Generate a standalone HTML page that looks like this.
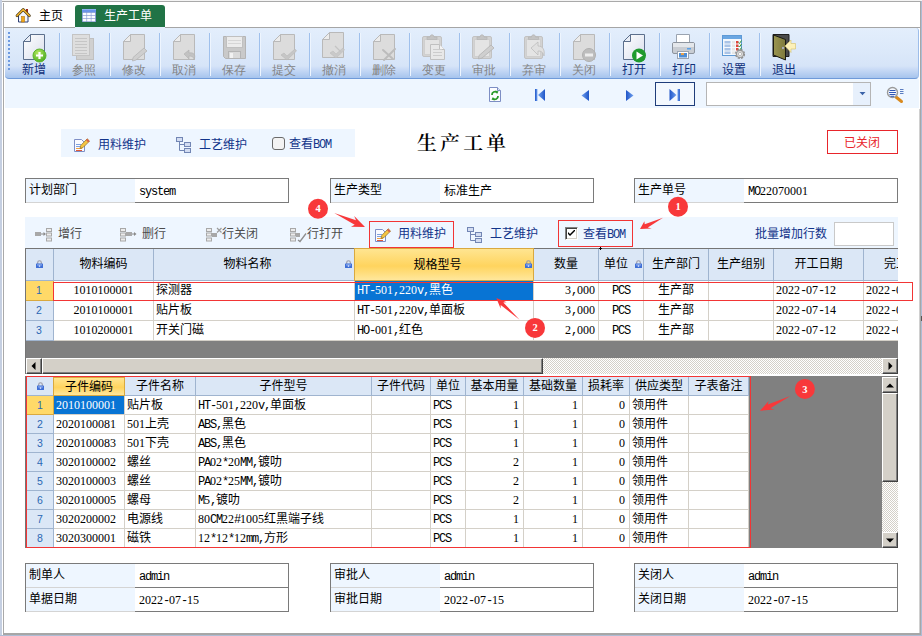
<!DOCTYPE html>
<html><head><meta charset="utf-8"><title>生产工单</title>
<style>
*{box-sizing:border-box}
html,body{margin:0;padding:0}
body{width:922px;height:636px;position:relative;overflow:hidden;background:#fff;font-family:"Liberation Serif","Noto Sans CJK SC",sans-serif;font-size:12px;color:#000;line-height:14px}
.a{position:absolute}
.t{position:absolute;white-space:nowrap;line-height:14px;height:14px}
#tb{left:5px;top:28px;width:914px;height:51px;background:linear-gradient(#e3eefc 0,#dce9fa 22px,#d6e4f8 38px,#cadbf6 41px,#a6c4ed 50px);border-bottom:1px solid #6f9ad9;border-right:1px solid #9dbdea;border-radius:0 3px 4px 4px}
.sep{position:absolute;top:33px;width:2px;height:43px;border-left:1px solid #9fc0ec;border-right:1px solid #eef5fe}
.bl{position:absolute;top:63px;width:50px;text-align:center;color:#10307a;white-space:nowrap;line-height:14px}
.bl.d{color:#838383}
.ic{position:absolute;top:33px;width:28px;height:28px}
.fb{position:absolute;border:1px solid #7a7a7a;background:#fff}
.fl{position:absolute;left:0;top:0;background:#eef6ff}
.gh{position:absolute;background:#dbe7f6;border-right:1px solid #9fb4cf;border-bottom:1px solid #9fb4cf;text-align:center;white-space:nowrap;overflow:hidden}
.gh.s{background:linear-gradient(#ffe591 0,#ffd45e 55%,#ffe79c 100%);border:1px solid #d9a93f;}
.gc{position:absolute;background:#fff;border-right:1px solid #d4d0c8;border-bottom:1px solid #d4d0c8;white-space:nowrap;overflow:hidden}
.gc.sel{background:#0874d4;color:#fff}
.gi{position:absolute;background:#dbe7f6;border-right:1px solid #9fb4cf;border-bottom:1px solid #9fb4cf;color:#2b68b4;text-align:center;font-family:"Liberation Sans",sans-serif;font-size:10.5px}
.gi.s{background:#ffd968;border-color:#d9a93f}
.nv{color:#14377d}
.m{font-family:"Liberation Mono",monospace;font-size:12px;letter-spacing:-1.2px}
.d{font-family:"Liberation Serif",serif;font-size:12px}
.sbb{position:absolute;background:#d4d0c8;border:1px solid;border-color:#fff #404040 #404040 #fff;box-shadow:inset -1px -1px 0 #808080, inset 1px 1px 0 #d4d0c8}
.trk{position:absolute;background-color:#fff;background-image:linear-gradient(45deg,#d4d0c8 25%,transparent 25%,transparent 75%,#d4d0c8 75%),linear-gradient(45deg,#d4d0c8 25%,transparent 25%,transparent 75%,#d4d0c8 75%);background-size:2px 2px;background-position:0 0,1px 1px}
</style></head><body>
<div class="a" style="left:0px;top:0px;width:2px;height:636px;background:#c5cfe1;"></div>
<div class="a" style="left:921px;top:0px;width:1px;height:636px;background:#aebcd5;"></div>
<div class="a" style="left:0px;top:635px;width:922px;height:1px;background:#aebcd5;"></div>
<div class="a" style="left:2px;top:0px;width:920px;height:1px;background:#f4f4f4;"></div>
<div class="a" style="left:2px;top:1px;width:919px;height:1px;background:#a9a9a9;"></div>
<div class="a" style="left:3px;top:3px;width:1px;height:631px;background:#a9a9a9;"></div>
<div class="a" style="left:920px;top:2px;width:1px;height:633px;background:#a7a7a7;"></div>
<div class="a" style="left:919px;top:109px;width:1px;height:524px;background:#d0d0d0;"></div>
<div class="a" style="left:3px;top:633px;width:918px;height:2px;background:#a7a7a7;"></div>
<div class="a" style="left:921px;top:316px;width:1px;height:5px;background:#555;"></div>
<div class="a" style="left:4px;top:27px;width:916px;height:1px;background:#a5a5a5;"></div>
<div class="a" style="left:75px;top:5px;width:90px;height:22px;background:#217346;border-radius:3px 3px 0 0"></div>
<div class="a" style="left:75px;top:27px;width:90px;height:1px;background:#e3eefc;"></div>
<svg class="a" style="left:15px;top:7px" width="17" height="17" viewBox="15 7 17 17">
<rect x="26" y="9" width="2" height="5" fill="#9c2a1c"/>
<path d="M18.500 15v7h9.500v-7l-4.750-4.500z" fill="#f4f6fc" stroke="#2d3f74" stroke-width="1"/>
<rect x="21.500" y="16.500" width="3" height="5.500" fill="#f0a81c" stroke="#b87708" stroke-width=".6"/>
<path d="M17 15.800l6.200-6.300 6.200 6.300" fill="none" stroke="#4a3a18" stroke-width="2.700" stroke-linecap="round" stroke-linejoin="round"/>
<path d="M17 15.800l6.200-6.300 6.200 6.300" fill="none" stroke="#f6b72a" stroke-width="1.400" stroke-linecap="round" stroke-linejoin="round"/>
</svg>
<svg class="a" style="left:82px;top:9px" width="14" height="13" viewBox="0 0 14 13">
<rect x="0" y="0" width="14" height="13" fill="#7f95cf"/>
<rect x="0" y="0" width="14" height="3.200" fill="#6a94ea"/>
<rect x="0" y="0" width="14" height="1" fill="#8fb2f4"/>
<rect x="0.80" y="3.80" width="3.700" height="2.450" fill="#fbfcff"/>
<rect x="5.10" y="3.80" width="3.700" height="2.450" fill="#fbfcff"/>
<rect x="9.40" y="3.80" width="3.700" height="2.450" fill="#fbfcff"/>
<rect x="0.80" y="6.85" width="3.700" height="2.450" fill="#fbfcff"/>
<rect x="5.10" y="6.85" width="3.700" height="2.450" fill="#fbfcff"/>
<rect x="9.40" y="6.85" width="3.700" height="2.450" fill="#fbfcff"/>
<rect x="0.80" y="9.90" width="3.700" height="2.450" fill="#fbfcff"/>
<rect x="5.10" y="9.90" width="3.700" height="2.450" fill="#fbfcff"/>
<rect x="9.40" y="9.90" width="3.700" height="2.450" fill="#fbfcff"/>
</svg>
<div class="t" style="left:39px;top:9px;">主页</div>
<div class="t" style="left:104px;top:9px;color:#fff">生产工单</div>
<div class="a" id="tb"></div>
<div class="a" style="left:8px;top:32px;width:2px;height:2px;background:#6f9be0;"></div>
<div class="a" style="left:8px;top:36px;width:2px;height:2px;background:#6f9be0;"></div>
<div class="a" style="left:8px;top:40px;width:2px;height:2px;background:#6f9be0;"></div>
<div class="a" style="left:8px;top:44px;width:2px;height:2px;background:#6f9be0;"></div>
<div class="a" style="left:8px;top:48px;width:2px;height:2px;background:#6f9be0;"></div>
<div class="a" style="left:8px;top:52px;width:2px;height:2px;background:#6f9be0;"></div>
<div class="a" style="left:8px;top:56px;width:2px;height:2px;background:#6f9be0;"></div>
<div class="a" style="left:8px;top:60px;width:2px;height:2px;background:#6f9be0;"></div>
<div class="a" style="left:8px;top:64px;width:2px;height:2px;background:#6f9be0;"></div>
<div class="a" style="left:8px;top:68px;width:2px;height:2px;background:#6f9be0;"></div>
<div class="bl" style="left:9px">新增</div>
<div class="sep" style="left:59px"></div>
<div class="bl d" style="left:59px">参照</div>
<div class="sep" style="left:109px"></div>
<div class="bl d" style="left:109px">修改</div>
<div class="sep" style="left:159px"></div>
<div class="bl d" style="left:159px">取消</div>
<div class="sep" style="left:209px"></div>
<div class="bl d" style="left:209px">保存</div>
<div class="sep" style="left:259px"></div>
<div class="bl d" style="left:259px">提交</div>
<div class="sep" style="left:309px"></div>
<div class="bl d" style="left:309px">撤消</div>
<div class="sep" style="left:359px"></div>
<div class="bl d" style="left:359px">删除</div>
<div class="sep" style="left:409px"></div>
<div class="bl d" style="left:409px">变更</div>
<div class="sep" style="left:459px"></div>
<div class="bl d" style="left:459px">审批</div>
<div class="sep" style="left:509px"></div>
<div class="bl d" style="left:509px">弃审</div>
<div class="sep" style="left:559px"></div>
<div class="bl d" style="left:559px">关闭</div>
<div class="sep" style="left:609px"></div>
<div class="bl" style="left:609px">打开</div>
<div class="sep" style="left:659px"></div>
<div class="bl" style="left:659px">打印</div>
<div class="sep" style="left:709px"></div>
<div class="bl" style="left:709px">设置</div>
<div class="sep" style="left:759px"></div>
<div class="bl" style="left:759px">退出</div>
<svg class="a" style="left:0;top:28px" width="922" height="51" viewBox="0 28 922 51">
<defs><linearGradient id="pg" x1="0" y1="0" x2="1" y2="1"><stop offset="0" stop-color="#ffffff"/><stop offset="1" stop-color="#d9deec"/></linearGradient><radialGradient id="gr" cx=".4" cy=".3" r=".8"><stop offset="0" stop-color="#b5ea5e"/><stop offset="1" stop-color="#3fa31d"/></radialGradient><linearGradient id="door" x1="0" y1="0" x2="1" y2="0"><stop offset="0" stop-color="#9a9550"/><stop offset="1" stop-color="#7f7a3c"/></linearGradient></defs>
<path d="M30.5 34.5H44.5V59.5H23.5V41.5Z" fill="url(#pg)" stroke="#5c6f8c"/><path d="M30.5 34.5V41.5H23.5Z" fill="#e9eef7" stroke="#5c6f8c" stroke-linejoin="round"/>
<circle cx="39.5" cy="55.5" r="6.5" fill="url(#gr)" stroke="#5bb52c" stroke-width="1"/>
<path d="M36 55.5h7M39.5 52v7" stroke="#fff" stroke-width="2.2"/>
<rect x="76.5" y="38.5" width="17" height="21" fill="#d0d0d0" stroke="#c0c0c0"/>
<rect x="72.5" y="34.5" width="17" height="21" fill="#dedede" stroke="#c4c4c4"/>
<path d="M75 38.5h12" stroke="#c6c6c6"/>
<path d="M75 41.5h12" stroke="#c6c6c6"/>
<path d="M75 44.5h12" stroke="#c6c6c6"/>
<path d="M75 47.5h12" stroke="#c6c6c6"/>
<path d="M75 50.5h12" stroke="#c6c6c6"/>
<path d="M75 53.5h12" stroke="#c6c6c6"/>
<path d="M130.5 34.5H144.5V59.5H123.5V41.5Z" fill="#dcdcdc" stroke="#b9b9b9"/><path d="M130.5 34.5V41.5H123.5Z" fill="#ececec" stroke="#b9b9b9" stroke-linejoin="round"/>
<path d="M144 48l3 3-11 9-3.5 1 .5-3.5z" fill="#cfcfcf" stroke="#b5b5b5" stroke-width=".8"/>
<path d="M180.5 34.5H194.5V59.5H173.5V41.5Z" fill="#dcdcdc" stroke="#b9b9b9"/><path d="M180.5 34.5V41.5H173.5Z" fill="#ececec" stroke="#b9b9b9" stroke-linejoin="round"/>
<path d="M184 54l5-4v3c5-1 7 2 5 7c0-3-2-4-5-4v3z" fill="#c2c2c2" stroke="#b0b0b0" stroke-width=".6"/>
<path d="M223.5 36.5h22v22h-20l-2-2z" fill="#c9c9c9" stroke="#b4b4b4"/>
<rect x="226.5" y="36.5" width="16" height="11" fill="#ececec" stroke="#c0c0c0"/>
<path d="M228 40.5h13M228 43.5h13" stroke="#d6d6d6"/>
<rect x="228.5" y="51.5" width="12" height="7" fill="#dadada" stroke="#b4b4b4"/>
<rect x="230" y="53" width="3" height="5" fill="#f2f2f2"/>
<path d="M280.5 34.5H294.5V59.5H273.5V41.5Z" fill="#dcdcdc" stroke="#b9b9b9"/><path d="M280.5 34.5V41.5H273.5Z" fill="#ececec" stroke="#b9b9b9" stroke-linejoin="round"/>
<path d="M281 55l3-2 3 3 8-7 1.5 2-9.5 9z" fill="#c6c6c6" stroke="#b8b8b8" stroke-width=".6"/>
<path d="M329.5 32.5H343.5V57.5H322.5V39.5Z" fill="#dcdcdc" stroke="#b9b9b9"/><path d="M329.5 32.5V39.5H322.5Z" fill="#ececec" stroke="#b9b9b9" stroke-linejoin="round"/>
<path d="M330 53l3-2 3 3 7-6 1.5 2-8.5 8z" fill="#c9c9c9" stroke="#bdbdbd" stroke-width=".6"/>
<path d="M335 46l6 6" stroke="#c4c4c4" stroke-width="1.3"/>
<path d="M380.5 34.5H394.5V59.5H373.5V41.5Z" fill="#dcdcdc" stroke="#b9b9b9"/><path d="M380.5 34.5V41.5H373.5Z" fill="#ececec" stroke="#b9b9b9" stroke-linejoin="round"/>
<path d="M383 50l10 9M395 49l-11 11" stroke="#bcbcbc" stroke-width="2" stroke-linecap="round"/>
<rect x="422.5" y="36.5" width="19" height="20.0" rx="1.5" fill="#d3d3d3" stroke="#c2c2c2"/><rect x="424.5" y="39.5" width="15" height="15.0" fill="#e4e4e4" stroke="#cfcfcf"/><path d="M427.0 39.5v-2.5h3c0-3 4-3 4 0h3v2.5z" fill="#c4c4c4" stroke="#b4b4b4" stroke-width=".7"/>
<path d="M430.5 44.5h9l5 5v10h-14z" fill="#e8e8e8" stroke="#c0c0c0"/>
<path d="M439.5 44.5v5h5" fill="#f4f4f4" stroke="#c0c0c0"/>
<path d="M433 49.5h9" stroke="#cccccc"/>
<path d="M433 52.5h9" stroke="#cccccc"/>
<path d="M433 55.5h9" stroke="#cccccc"/>
<rect x="472.5" y="36.5" width="19" height="22.0" rx="1.5" fill="#d3d3d3" stroke="#c2c2c2"/><rect x="474.5" y="39.5" width="15" height="17.0" fill="#e4e4e4" stroke="#cfcfcf"/><path d="M477.0 39.5v-2.5h3c0-3 4-3 4 0h3v2.5z" fill="#c4c4c4" stroke="#b4b4b4" stroke-width=".7"/>
<path d="M491 45l3 3-12 10-3.5 1 .5-3.5z" fill="#cfcfcf" stroke="#b2b2b2" stroke-width=".8"/>
<rect x="524.5" y="36.5" width="18" height="22.0" rx="1.5" fill="#d3d3d3" stroke="#c2c2c2"/><rect x="526.5" y="39.5" width="14" height="17.0" fill="#e4e4e4" stroke="#cfcfcf"/><path d="M528.5 39.5v-2.5h3c0-3 4-3 4 0h3v2.5z" fill="#c4c4c4" stroke="#b4b4b4" stroke-width=".7"/>
<path d="M531 48l7-6v4c5 0 7 4 6 10c-1-4-3-5-6-5v4z" fill="#e0e0e0" stroke="#bdbdbd" stroke-width=".8"/>
<path d="M580.5 34.5H594.5V59.5H573.5V41.5Z" fill="#dcdcdc" stroke="#b9b9b9"/><path d="M580.5 34.5V41.5H573.5Z" fill="#ececec" stroke="#b9b9b9" stroke-linejoin="round"/>
<circle cx="589" cy="55" r="6.5" fill="#bdbdbd" stroke="#b0b0b0"/>
<rect x="585" y="53.5" width="8" height="3" fill="#ededed"/>
<path d="M630.5 34.5H644.5V59.5H623.5V41.5Z" fill="url(#pg)" stroke="#5c6f8c"/><path d="M630.5 34.5V41.5H623.5Z" fill="#e9eef7" stroke="#5c6f8c" stroke-linejoin="round"/>
<circle cx="639" cy="55.5" r="7" fill="#1f9a2e"/>
<path d="M636.5 51.5v8l6.5-4z" fill="#fff"/>
<path d="M676.5 44v-9.5h13v9.5" fill="#fff" stroke="#9aa3b0"/>
<rect x="672.5" y="42.5" width="22" height="11" rx="1.5" fill="#c9cdd3" stroke="#8d949e"/>
<rect x="673" y="43" width="21" height="4" fill="#e4e7eb"/>
<rect x="687" y="48" width="4" height="1.5" fill="#5aa0e6"/>
<rect x="677.5" y="51.5" width="11" height="7" fill="#fff" stroke="#9aa3b0"/>
<rect x="679" y="53" width="8" height="4.5" fill="#4f8ed6"/>
<rect x="681" y="53" width="3" height="2" fill="#e8a04a"/>
<rect x="722.5" y="35.5" width="19" height="20" fill="#f4f8fd" stroke="#5e9ad6"/>
<rect x="723" y="36" width="18" height="3" fill="#6aa6e2"/>
<rect x="724.5" y="41" width="6" height="2.5" fill="#a9c3e6"/>
<rect x="732" y="41" width="3" height="2.5" fill="#e6e6e6"/>
<rect x="736" y="41" width="2.5" height="2.5" fill="#e0453a"/>
<path d="M738.5 42.5l1 1 2-3" stroke="#3a9a35" fill="none" stroke-width="1"/>
<rect x="724.5" y="44.5" width="6" height="2.5" fill="#a9c3e6"/>
<rect x="732" y="44.5" width="3" height="2.5" fill="#e6e6e6"/>
<rect x="736" y="44.5" width="2.5" height="2.5" fill="#e0453a"/>
<path d="M738.5 46.0l1 1 2-3" stroke="#3a9a35" fill="none" stroke-width="1"/>
<rect x="724.5" y="48" width="6" height="2.5" fill="#a9c3e6"/>
<rect x="732" y="48" width="3" height="2.5" fill="#e6e6e6"/>
<rect x="736" y="48" width="2.5" height="2.5" fill="#e0453a"/>
<path d="M738.5 49.5l1 1 2-3" stroke="#3a9a35" fill="none" stroke-width="1"/>
<rect x="724.5" y="51.5" width="6" height="2.5" fill="#a9c3e6"/>
<rect x="732" y="51.5" width="3" height="2.5" fill="#e6e6e6"/>
<circle cx="740" cy="54" r="4" fill="#e9e9e9" stroke="#8e8e8e" stroke-width="2.2" stroke-dasharray="2 1.14"/>
<circle cx="740" cy="54" r="3.6" fill="#dcdcdc" stroke="#8e8e8e" stroke-width=".9"/>
<circle cx="740" cy="54" r="1.6" fill="#fff" stroke="#9a9a9a" stroke-width=".6"/>
<path d="M773 34.5h16v22h-16z" fill="#4a4a4a" stroke="#1e1e1e"/>
<path d="M773.5 35l12 4.5v20.5l-12-5z" fill="url(#door)" stroke="#1a1a12"/>
<circle cx="783" cy="48" r="1.2" fill="#d8d8e8" stroke="#555" stroke-width=".4"/>
<path d="M785 46l6-6v3.5h4.5v5.5h-4.5v3.5z" fill="#fdf1b8" stroke="#d9c777" stroke-width=".7"/>
</svg>
<div class="a" style="left:5px;top:79px;width:914px;height:29px;background:#eef6ff;"></div>
<div class="a" style="left:655px;top:82px;width:40px;height:24px;background:#f3f8fe;border:1px solid #1f3d7a"></div>
<div class="a" style="left:706px;top:82px;width:165px;height:24px;background:#fff;border:1px solid #b5b5b5"></div>
<div class="a" style="left:853px;top:83px;width:17px;height:22px;background:#e7f0fc;"></div>
<svg class="a" style="left:859px;top:92px" width="7" height="4"><path d="M0.5 0h6l-3 3.2z" fill="#3a62a8"/></svg>
<svg class="a" style="left:480px;top:79px" width="440" height="29" viewBox="480 79 440 29">
<defs><linearGradient id="nb" x1="0" y1="0" x2="1" y2="0"><stop offset="0" stop-color="#1f55c8"/><stop offset="1" stop-color="#6fa0ee"/></linearGradient><linearGradient id="nb2" x1="1" y1="0" x2="0" y2="0"><stop offset="0" stop-color="#1f55c8"/><stop offset="1" stop-color="#6fa0ee"/></linearGradient></defs>
<path d="M489.500 87.500h8l3 3v11h-11z" fill="#fdfdff" stroke="#7d8ec4"/>
<path d="M497.500 87.500v3h3" fill="#dfe6f8" stroke="#7d8ec4"/>
<path d="M492 95a3 3 0 0 1 5-2.500" fill="none" stroke="#2a9a2a" stroke-width="1.8"/>
<path d="M498 96a3 3 0 0 1-5 2.500" fill="none" stroke="#2a9a2a" stroke-width="1.800"/>
<path d="M495.500 90.500l3 1-1.500 2.500z" fill="#2a9a2a"/><path d="M494.500 100.500l-3-1 1.500-2.500z" fill="#2a9a2a"/>
<rect x="535" y="89" width="2.400" height="12" fill="url(#nb)"/>
<path d="M545 89v12l-7-6z" fill="url(#nb2)"/>
<path d="M589 90v11l-7.500-5.500z" fill="url(#nb2)"/>
<path d="M626 90v11l7.500-5.500z" fill="url(#nb)"/>
<path d="M669.500 89v12l7-6z" fill="url(#nb)"/>
<rect x="677.500" y="89" width="2.400" height="12" fill="url(#nb2)"/>
<path d="M896 97l5.500 4.500" stroke="#d98a1e" stroke-width="3" stroke-linecap="round"/>
<circle cx="892.500" cy="92.500" r="5" fill="#f4f8ff" stroke="#9a9a9a" stroke-width="1.400"/>
<path d="M889.500 90.500h6M889 92.500h7M889.500 94.500h6M890.500 96.300h3.500" stroke="#2f58b8" stroke-width="1"/>
<path d="M900 89.500h3.500M900 91.500h3.500M900 93.500h3.500" stroke="#5a7cc0" stroke-width="1"/>
</svg>
<div class="a" style="left:61px;top:129px;width:294px;height:28px;background:#eef6ff;"></div>
<div class="t" style="left:98px;top:138px;color:#12348a">用料维护</div>
<div class="t" style="left:199px;top:138px;color:#12348a">工艺维护</div>
<div class="a" style="left:272px;top:137px;width:13px;height:13px;background:#f3f3f3;border:1px solid #6a6a6a;border-radius:3px"></div>
<div class="t" style="left:289px;top:137px;color:#12348a">查看<span class="m">BOM</span></div>
<div class="t" style="left:417px;top:131px;font-family:'Liberation Serif','Noto Serif CJK SC',serif;font-weight:600;font-size:19.8px;letter-spacing:3.3px;line-height:24px;height:24px">生产工单</div>
<div class="a" style="left:827px;top:130px;width:71px;height:24px;background:#fff;border:1px solid #e8252b"></div>
<div class="t" style="left:844px;top:136px;color:#e8252b">已关闭</div>
<div class="fb" style="left:25px;top:178px;width:264px;height:25px">
<div class="fl" style="top:0px;width:109px;height:23px"></div>
<div class="a" style="left:0px;top:23px;width:109px;height:1px;background:#d4d4d4"></div>
<div class="t" style="left:3px;top:4px">计划部门</div>
<div class="t" style="left:113px;top:5px"><span class="m">system</span></div>
</div>
<div class="fb" style="left:330px;top:178px;width:264px;height:25px">
<div class="fl" style="top:0px;width:109px;height:23px"></div>
<div class="a" style="left:0px;top:23px;width:109px;height:1px;background:#d4d4d4"></div>
<div class="t" style="left:3px;top:4px">生产类型</div>
<div class="t" style="left:113px;top:5px">标准生产</div>
</div>
<div class="fb" style="left:634px;top:178px;width:264px;height:25px">
<div class="fl" style="top:0px;width:109px;height:23px"></div>
<div class="a" style="left:0px;top:23px;width:109px;height:1px;background:#d4d4d4"></div>
<div class="t" style="left:3px;top:4px">生产单号</div>
<div class="t" style="left:113px;top:5px"><span class="m">MO</span><span class="d">22070001</span></div>
</div>
<div class="fb" style="left:25px;top:563px;width:264px;height:49px">
<div class="fl" style="top:0px;width:109px;height:23px"></div>
<div class="a" style="left:0px;top:23px;width:109px;height:1px;background:#d4d4d4"></div>
<div class="a" style="left:109px;top:23px;width:153px;height:1px;background:#7a7a7a"></div>
<div class="t" style="left:3px;top:4px">制单人</div>
<div class="t" style="left:113px;top:5px"><span class="m">admin</span></div>
<div class="fl" style="top:24px;width:109px;height:23px"></div>
<div class="a" style="left:0px;top:47px;width:109px;height:1px;background:#d4d4d4"></div>
<div class="t" style="left:3px;top:28px">单据日期</div>
<div class="t" style="left:113px;top:29px"><span class="d">2022</span><span class="m">-</span><span class="d">07</span><span class="m">-</span><span class="d">15</span></div>
</div>
<div class="fb" style="left:330px;top:563px;width:264px;height:49px">
<div class="fl" style="top:0px;width:109px;height:23px"></div>
<div class="a" style="left:0px;top:23px;width:109px;height:1px;background:#d4d4d4"></div>
<div class="a" style="left:109px;top:23px;width:153px;height:1px;background:#7a7a7a"></div>
<div class="t" style="left:3px;top:4px">审批人</div>
<div class="t" style="left:113px;top:5px"><span class="m">admin</span></div>
<div class="fl" style="top:24px;width:109px;height:23px"></div>
<div class="a" style="left:0px;top:47px;width:109px;height:1px;background:#d4d4d4"></div>
<div class="t" style="left:3px;top:28px">审批日期</div>
<div class="t" style="left:113px;top:29px"><span class="d">2022</span><span class="m">-</span><span class="d">07</span><span class="m">-</span><span class="d">15</span></div>
</div>
<div class="fb" style="left:634px;top:563px;width:264px;height:49px">
<div class="fl" style="top:0px;width:109px;height:23px"></div>
<div class="a" style="left:0px;top:23px;width:109px;height:1px;background:#d4d4d4"></div>
<div class="a" style="left:109px;top:23px;width:153px;height:1px;background:#7a7a7a"></div>
<div class="t" style="left:3px;top:4px">关闭人</div>
<div class="t" style="left:113px;top:5px"><span class="m">admin</span></div>
<div class="fl" style="top:24px;width:109px;height:23px"></div>
<div class="a" style="left:0px;top:47px;width:109px;height:1px;background:#d4d4d4"></div>
<div class="t" style="left:3px;top:28px">关闭日期</div>
<div class="t" style="left:113px;top:29px"><span class="d">2022</span><span class="m">-</span><span class="d">07</span><span class="m">-</span><span class="d">15</span></div>
</div>
<div class="a" style="left:25px;top:217px;width:873px;height:31px;background:#eef6ff;"></div>
<div class="t" style="left:58px;top:227px;color:#4c4c4c">增行</div>
<div class="t" style="left:142px;top:227px;color:#4c4c4c">删行</div>
<div class="t" style="left:222px;top:227px;color:#4c4c4c">行关闭</div>
<div class="t" style="left:307px;top:227px;color:#4c4c4c">行打开</div>
<div class="t" style="left:398px;top:227px;color:#12348a">用料维护</div>
<div class="t" style="left:490px;top:227px;color:#12348a">工艺维护</div>
<div class="t" style="left:583px;top:227px;color:#12348a">查看<span class="m">BOM</span></div>
<div class="t" style="left:755px;top:227px;color:#12348a">批量增加行数</div>
<div class="a" style="left:834px;top:222px;width:60px;height:24px;background:#fff;border:1px solid #c9c9c9"></div>
<svg class="a" style="left:0;top:120px" width="922" height="130" viewBox="0 120 922 130">
<path d="M74.5 139.5h7l3 3v9h-10z" fill="#fafbff" stroke="#7f8fc6"/><path d="M76 144.5h5M76 146.5h4" stroke="#7ea0dc"/><path d="M76 148.5h6" stroke="#f0a040"/><path d="M76 150.5h6" stroke="#e05a3a"/><path d="M87.2 138.8l2.300 2.300-6.500 6.500-3 .800 .800-3z" fill="#f5c542" stroke="#8a6a1e" stroke-width=".7"/><path d="M87.2 138.8l2.300 2.300-1.300 1.300-2.300-2.300z" fill="#d8604a"/>
<rect x="176.5" y="137.5" width="6" height="4" fill="#d3ddf2" stroke="#7286b4"/><rect x="184.5" y="142.5" width="6" height="4" fill="#d3ddf2" stroke="#7286b4"/><rect x="184.5" y="148.5" width="6" height="4" fill="#d3ddf2" stroke="#7286b4"/><path d="M179.5 142v8.500h5M179.5 144.5h5" fill="none" stroke="#7286b4"/>
<path d="M375.5 229.5h7l3 3v9h-10z" fill="#fafbff" stroke="#7f8fc6"/><path d="M377 234.5h5M377 236.5h4" stroke="#7ea0dc"/><path d="M377 238.5h6" stroke="#f0a040"/><path d="M377 240.5h6" stroke="#e05a3a"/><path d="M388.2 228.8l2.300 2.300-6.500 6.500-3 .800 .800-3z" fill="#f5c542" stroke="#8a6a1e" stroke-width=".7"/><path d="M388.2 228.8l2.300 2.300-1.300 1.300-2.300-2.300z" fill="#d8604a"/>
<rect x="467.5" y="227.5" width="6" height="4" fill="#d3ddf2" stroke="#7286b4"/><rect x="475.5" y="232.5" width="6" height="4" fill="#d3ddf2" stroke="#7286b4"/><rect x="475.5" y="238.5" width="6" height="4" fill="#d3ddf2" stroke="#7286b4"/><path d="M470.5 232v8.500h5M470.5 234.5h5" fill="none" stroke="#7286b4"/>
<rect x="35" y="232" width="6" height="4" fill="#a8a8a8"/><path d="M41 234h3" stroke="#8a8a8a"/><path d="M43.500 232l2.500 2-2.500 2z" fill="#8a8a8a"/>
<rect x="46.500" y="228.5" width="5" height="3" fill="#ececec" stroke="#a8a8a8"/>
<rect x="46.500" y="233.0" width="5" height="3" fill="#ececec" stroke="#a8a8a8"/>
<rect x="46.500" y="238.0" width="5" height="3" fill="#ececec" stroke="#a8a8a8"/>
<rect x="120.500" y="228.5" width="5" height="3" fill="#ececec" stroke="#a8a8a8"/>
<rect x="120.500" y="233.0" width="5" height="3" fill="#ececec" stroke="#a8a8a8"/>
<rect x="120.500" y="238.0" width="5" height="3" fill="#ececec" stroke="#a8a8a8"/>
<rect x="126" y="232" width="6" height="4" fill="#a8a8a8"/><path d="M132 234h3" stroke="#8a8a8a"/><path d="M134 232l2.500 2-2.500 2z" fill="#8a8a8a"/>
<rect x="206.500" y="228.5" width="5" height="3" fill="#ececec" stroke="#a8a8a8"/>
<rect x="206.500" y="233.0" width="5" height="3" fill="#ececec" stroke="#a8a8a8"/>
<rect x="206.500" y="238.0" width="5" height="3" fill="#ececec" stroke="#a8a8a8"/>
<rect x="212" y="233" width="5" height="4" fill="#a8a8a8"/>
<path d="M217 228l4.500 4.500M221.500 228l-4.500 4.500" stroke="#9c9c9c" stroke-width="1.200"/>
<rect x="290.500" y="228.5" width="5" height="3" fill="#ececec" stroke="#a8a8a8"/>
<rect x="290.500" y="233.0" width="5" height="3" fill="#ececec" stroke="#a8a8a8"/>
<rect x="290.500" y="238.0" width="5" height="3" fill="#ececec" stroke="#a8a8a8"/>
<rect x="296" y="233" width="4" height="4" fill="#a8a8a8"/>
<path d="M298 240l2 1.500 6-8" fill="none" stroke="#8e8e8e" stroke-width="1.300"/>
</svg>
<div class="a" style="left:565px;top:227px;width:13px;height:13px;background:#fff;border:1px solid;border-color:#808080 #fff #fff #808080;box-shadow:inset 1px 1px 0 #404040,inset -1px -1px 0 #d4d0c8"></div>
<svg class="a" style="left:568px;top:230px" width="7" height="7"><path d="M0 2v2l2 2 5-5v-2l-5 5z" fill="#000"/></svg>
<div class="a" style="left:25px;top:248px;width:873px;height:1px;background:#757575;"></div>
<div class="gh" style="left:25px;top:249px;width:29px;height:32px;padding-top:8px;"></div>
<div class="gh" style="left:54px;top:249px;width:100px;height:32px;padding-top:8px;">物料编码</div>
<div class="gh" style="left:154px;top:249px;width:201px;height:32px;padding-top:8px;padding-right:13px;">物料名称</div>
<div class="gh s" style="left:354px;top:248px;width:180px;height:33px;line-height:14px;padding-top:9px;padding-right:13px">规格型号</div>
<div class="gh" style="left:534px;top:249px;width:65px;height:32px;padding-top:8px;">数量</div>
<div class="gh" style="left:599px;top:249px;width:45px;height:32px;padding-top:8px;text-align:left;padding-left:5px">单位</div>
<div class="gh" style="left:644px;top:249px;width:65px;height:32px;padding-top:8px;">生产部门</div>
<div class="gh" style="left:709px;top:249px;width:65px;height:32px;padding-top:8px;">生产组别</div>
<div class="gh" style="left:774px;top:249px;width:90px;height:32px;padding-top:8px;">开工日期</div>
<div class="gh" style="left:864px;top:249px;width:34px;height:32px;padding-top:8px;border-right:0;text-align:left;padding-left:20px">完工</div>
<div class="gi s" style="left:25px;top:281px;width:29px;height:20px;padding-top:2px;">1</div>
<div class="gc" style="left:54px;top:281px;width:100px;height:20px;padding-top:2px;text-align:center;"><span class="d">1010100001</span></div>
<div class="gc" style="left:154px;top:281px;width:201px;height:20px;padding-top:2px;text-align:left;padding-left:2px;">探测器</div>
<div class="gc sel" style="left:355px;top:281px;width:179px;height:20px;padding-top:2px;text-align:left;padding-left:2px;"><span class="m">HT-</span><span class="d">501</span><span class="m">,</span><span class="d">220</span><span class="m">v,</span>黑色</div>
<div class="gc" style="left:534px;top:281px;width:65px;height:20px;padding-top:2px;text-align:right;padding-right:3px;"><span class="d">3</span><span class="m">,</span><span class="d">000</span></div>
<div class="gc" style="left:599px;top:281px;width:45px;height:20px;padding-top:2px;text-align:center;"><span class="m">PCS</span></div>
<div class="gc" style="left:644px;top:281px;width:65px;height:20px;padding-top:2px;text-align:center;">生产部</div>
<div class="gc" style="left:709px;top:281px;width:65px;height:20px;padding-top:2px;text-align:left;padding-left:2px;"></div>
<div class="gc" style="left:774px;top:281px;width:90px;height:20px;padding-top:2px;text-align:left;padding-left:2px;"><span class="d">2022</span><span class="m">-</span><span class="d">07</span><span class="m">-</span><span class="d">12</span></div>
<div class="gc" style="left:864px;top:281px;width:34px;height:20px;padding-top:2px;text-align:left;padding-left:2px;border-right:0;"><span class="d">2022</span><span class="m">-</span><span class="d">0</span></div>
<div class="gi" style="left:25px;top:301px;width:29px;height:20px;padding-top:2px;">2</div>
<div class="gc" style="left:54px;top:301px;width:100px;height:20px;padding-top:2px;text-align:center;"><span class="d">2010100001</span></div>
<div class="gc" style="left:154px;top:301px;width:201px;height:20px;padding-top:2px;text-align:left;padding-left:2px;">贴片板</div>
<div class="gc" style="left:355px;top:301px;width:179px;height:20px;padding-top:2px;text-align:left;padding-left:2px;"><span class="m">HT-</span><span class="d">501</span><span class="m">,</span><span class="d">220</span><span class="m">v,</span>单面板</div>
<div class="gc" style="left:534px;top:301px;width:65px;height:20px;padding-top:2px;text-align:right;padding-right:3px;"><span class="d">3</span><span class="m">,</span><span class="d">000</span></div>
<div class="gc" style="left:599px;top:301px;width:45px;height:20px;padding-top:2px;text-align:center;"><span class="m">PCS</span></div>
<div class="gc" style="left:644px;top:301px;width:65px;height:20px;padding-top:2px;text-align:center;">生产部</div>
<div class="gc" style="left:709px;top:301px;width:65px;height:20px;padding-top:2px;text-align:left;padding-left:2px;"></div>
<div class="gc" style="left:774px;top:301px;width:90px;height:20px;padding-top:2px;text-align:left;padding-left:2px;"><span class="d">2022</span><span class="m">-</span><span class="d">07</span><span class="m">-</span><span class="d">14</span></div>
<div class="gc" style="left:864px;top:301px;width:34px;height:20px;padding-top:2px;text-align:left;padding-left:2px;border-right:0;"><span class="d">2022</span><span class="m">-</span><span class="d">0</span></div>
<div class="gi" style="left:25px;top:321px;width:29px;height:20px;padding-top:2px;">3</div>
<div class="gc" style="left:54px;top:321px;width:100px;height:20px;padding-top:2px;text-align:center;"><span class="d">1010200001</span></div>
<div class="gc" style="left:154px;top:321px;width:201px;height:20px;padding-top:2px;text-align:left;padding-left:2px;">开关门磁</div>
<div class="gc" style="left:355px;top:321px;width:179px;height:20px;padding-top:2px;text-align:left;padding-left:2px;"><span class="m">HO-</span><span class="d">001</span><span class="m">,</span>红色</div>
<div class="gc" style="left:534px;top:321px;width:65px;height:20px;padding-top:2px;text-align:right;padding-right:3px;"><span class="d">2</span><span class="m">,</span><span class="d">000</span></div>
<div class="gc" style="left:599px;top:321px;width:45px;height:20px;padding-top:2px;text-align:center;"><span class="m">PCS</span></div>
<div class="gc" style="left:644px;top:321px;width:65px;height:20px;padding-top:2px;text-align:center;">生产部</div>
<div class="gc" style="left:709px;top:321px;width:65px;height:20px;padding-top:2px;text-align:left;padding-left:2px;"></div>
<div class="gc" style="left:774px;top:321px;width:90px;height:20px;padding-top:2px;text-align:left;padding-left:2px;"><span class="d">2022</span><span class="m">-</span><span class="d">07</span><span class="m">-</span><span class="d">12</span></div>
<div class="gc" style="left:864px;top:321px;width:34px;height:20px;padding-top:2px;text-align:left;padding-left:2px;border-right:0;"><span class="d">2022</span><span class="m">-</span><span class="d">0</span></div>
<svg class="a" style="left:36px;top:260px" width="7" height="8" viewBox="0 0 7 8"><path d="M1.700 4v-1.500a1.800 1.800 0 0 1 3.600 0v1.500" fill="none" stroke="#9a9aa6" stroke-width="1.100"/><rect x="0" y="3.500" width="7" height="4.500" rx=".6" fill="#3f6fd6"/><rect x="1" y="4.300" width="5" height="1.200" fill="#86a8ee"/><rect x="2.800" y="5.300" width="1.400" height="1.500" fill="#dfe8fb"/></svg>
<svg class="a" style="left:345px;top:260px" width="7" height="8" viewBox="0 0 7 8"><path d="M1.700 4v-1.500a1.800 1.800 0 0 1 3.600 0v1.500" fill="none" stroke="#9a9aa6" stroke-width="1.100"/><rect x="0" y="3.500" width="7" height="4.500" rx=".6" fill="#3f6fd6"/><rect x="1" y="4.300" width="5" height="1.200" fill="#86a8ee"/><rect x="2.800" y="5.300" width="1.400" height="1.500" fill="#dfe8fb"/></svg>
<svg class="a" style="left:525px;top:260px" width="7" height="8" viewBox="0 0 7 8"><path d="M1.700 4v-1.500a1.800 1.800 0 0 1 3.600 0v1.500" fill="none" stroke="#9a9aa6" stroke-width="1.100"/><rect x="0" y="3.500" width="7" height="4.500" rx=".6" fill="#3f6fd6"/><rect x="1" y="4.300" width="5" height="1.200" fill="#86a8ee"/><rect x="2.800" y="5.300" width="1.400" height="1.500" fill="#dfe8fb"/></svg>
<svg class="a" style="left:635px;top:260px" width="7" height="8" viewBox="0 0 7 8"><path d="M1.700 4v-1.500a1.800 1.800 0 0 1 3.600 0v1.500" fill="none" stroke="#9a9aa6" stroke-width="1.100"/><rect x="0" y="3.500" width="7" height="4.500" rx=".6" fill="#3f6fd6"/><rect x="1" y="4.300" width="5" height="1.200" fill="#86a8ee"/><rect x="2.800" y="5.300" width="1.400" height="1.500" fill="#dfe8fb"/></svg>
<div class="a" style="left:25px;top:341px;width:873px;height:17px;background:#808080;"></div>
<div class="trk" style="left:25px;top:358px;width:873px;height:16px"></div>
<div class="sbb" style="left:26px;top:358px;width:16px;height:16px"></div>
<div class="sbb" style="left:882px;top:358px;width:16px;height:16px"></div>
<div class="sbb" style="left:42px;top:358px;width:501px;height:16px"></div>
<svg class="a" style="left:31px;top:362px" width="5" height="8"><path d="M4.5 0v8l-4-4z" fill="#000"/></svg>
<svg class="a" style="left:888px;top:362px" width="5" height="8"><path d="M0.5 0v8l4-4z" fill="#000"/></svg>
<div class="a" style="left:25px;top:248px;width:1px;height:126px;background:#757575;"></div>
<div class="a" style="left:25px;top:376px;width:873px;height:172px;background:#808080;"></div>
<div class="gh" style="left:27px;top:377px;width:27px;height:19px;padding-top:2px"></div>
<div class="gh s" style="left:53px;top:377px;width:72px;height:19px;padding-top:2px">子件编码</div>
<div class="gh" style="left:125px;top:377px;width:71px;height:19px;padding-top:2px">子件名称</div>
<div class="gh" style="left:196px;top:377px;width:176px;height:19px;padding-top:2px">子件型号</div>
<div class="gh" style="left:372px;top:377px;width:59px;height:19px;padding-top:2px">子件代码</div>
<div class="gh" style="left:431px;top:377px;width:35px;height:19px;padding-top:2px">单位</div>
<div class="gh" style="left:466px;top:377px;width:58px;height:19px;padding-top:2px">基本用量</div>
<div class="gh" style="left:524px;top:377px;width:59px;height:19px;padding-top:2px">基础数量</div>
<div class="gh" style="left:583px;top:377px;width:47px;height:19px;padding-top:2px">损耗率</div>
<div class="gh" style="left:630px;top:377px;width:59px;height:19px;padding-top:2px">供应类型</div>
<div class="gh" style="left:689px;top:377px;width:60px;height:19px;padding-top:2px">子表备注</div>
<div class="gi s" style="left:27px;top:396px;width:27px;height:19px;padding-top:2px">1</div>
<div class="gc sel" style="left:54px;top:396px;width:71px;height:19px;padding-top:2px;text-align:left;padding-left:2px;"><span class="d">2010100001</span></div>
<div class="gc" style="left:125px;top:396px;width:71px;height:19px;padding-top:2px;text-align:left;padding-left:2px;">贴片板</div>
<div class="gc" style="left:196px;top:396px;width:176px;height:19px;padding-top:2px;text-align:left;padding-left:2px;"><span class="m">HT-</span><span class="d">501</span><span class="m">,</span><span class="d">220</span><span class="m">v,</span>单面板</div>
<div class="gc" style="left:372px;top:396px;width:59px;height:19px;padding-top:2px;text-align:left;padding-left:2px;"></div>
<div class="gc" style="left:431px;top:396px;width:35px;height:19px;padding-top:2px;text-align:left;padding-left:2px;"><span class="m">PCS</span></div>
<div class="gc" style="left:466px;top:396px;width:58px;height:19px;padding-top:2px;text-align:right;padding-right:4px;"><span class="d">1</span></div>
<div class="gc" style="left:524px;top:396px;width:59px;height:19px;padding-top:2px;text-align:right;padding-right:4px;"><span class="d">1</span></div>
<div class="gc" style="left:583px;top:396px;width:47px;height:19px;padding-top:2px;text-align:right;padding-right:4px;"><span class="d">0</span></div>
<div class="gc" style="left:630px;top:396px;width:59px;height:19px;padding-top:2px;text-align:left;padding-left:2px;">领用件</div>
<div class="gc" style="left:689px;top:396px;width:60px;height:19px;padding-top:2px;text-align:left;padding-left:2px;"></div>
<div class="gi" style="left:27px;top:415px;width:27px;height:19px;padding-top:2px">2</div>
<div class="gc" style="left:54px;top:415px;width:71px;height:19px;padding-top:2px;text-align:left;padding-left:2px;"><span class="d">2020100081</span></div>
<div class="gc" style="left:125px;top:415px;width:71px;height:19px;padding-top:2px;text-align:left;padding-left:2px;"><span class="d">501</span>上壳</div>
<div class="gc" style="left:196px;top:415px;width:176px;height:19px;padding-top:2px;text-align:left;padding-left:2px;"><span class="m">ABS,</span>黑色</div>
<div class="gc" style="left:372px;top:415px;width:59px;height:19px;padding-top:2px;text-align:left;padding-left:2px;"></div>
<div class="gc" style="left:431px;top:415px;width:35px;height:19px;padding-top:2px;text-align:left;padding-left:2px;"><span class="m">PCS</span></div>
<div class="gc" style="left:466px;top:415px;width:58px;height:19px;padding-top:2px;text-align:right;padding-right:4px;"><span class="d">1</span></div>
<div class="gc" style="left:524px;top:415px;width:59px;height:19px;padding-top:2px;text-align:right;padding-right:4px;"><span class="d">1</span></div>
<div class="gc" style="left:583px;top:415px;width:47px;height:19px;padding-top:2px;text-align:right;padding-right:4px;"><span class="d">0</span></div>
<div class="gc" style="left:630px;top:415px;width:59px;height:19px;padding-top:2px;text-align:left;padding-left:2px;">领用件</div>
<div class="gc" style="left:689px;top:415px;width:60px;height:19px;padding-top:2px;text-align:left;padding-left:2px;"></div>
<div class="gi" style="left:27px;top:434px;width:27px;height:19px;padding-top:2px">3</div>
<div class="gc" style="left:54px;top:434px;width:71px;height:19px;padding-top:2px;text-align:left;padding-left:2px;"><span class="d">2020100083</span></div>
<div class="gc" style="left:125px;top:434px;width:71px;height:19px;padding-top:2px;text-align:left;padding-left:2px;"><span class="d">501</span>下壳</div>
<div class="gc" style="left:196px;top:434px;width:176px;height:19px;padding-top:2px;text-align:left;padding-left:2px;"><span class="m">ABS,</span>黑色</div>
<div class="gc" style="left:372px;top:434px;width:59px;height:19px;padding-top:2px;text-align:left;padding-left:2px;"></div>
<div class="gc" style="left:431px;top:434px;width:35px;height:19px;padding-top:2px;text-align:left;padding-left:2px;"><span class="m">PCS</span></div>
<div class="gc" style="left:466px;top:434px;width:58px;height:19px;padding-top:2px;text-align:right;padding-right:4px;"><span class="d">1</span></div>
<div class="gc" style="left:524px;top:434px;width:59px;height:19px;padding-top:2px;text-align:right;padding-right:4px;"><span class="d">1</span></div>
<div class="gc" style="left:583px;top:434px;width:47px;height:19px;padding-top:2px;text-align:right;padding-right:4px;"><span class="d">0</span></div>
<div class="gc" style="left:630px;top:434px;width:59px;height:19px;padding-top:2px;text-align:left;padding-left:2px;">领用件</div>
<div class="gc" style="left:689px;top:434px;width:60px;height:19px;padding-top:2px;text-align:left;padding-left:2px;"></div>
<div class="gi" style="left:27px;top:453px;width:27px;height:19px;padding-top:2px">4</div>
<div class="gc" style="left:54px;top:453px;width:71px;height:19px;padding-top:2px;text-align:left;padding-left:2px;"><span class="d">3020100002</span></div>
<div class="gc" style="left:125px;top:453px;width:71px;height:19px;padding-top:2px;text-align:left;padding-left:2px;">螺丝</div>
<div class="gc" style="left:196px;top:453px;width:176px;height:19px;padding-top:2px;text-align:left;padding-left:2px;"><span class="m">PA</span><span class="d">02</span><span class="m">*</span><span class="d">20</span><span class="m">MM,</span>镀叻</div>
<div class="gc" style="left:372px;top:453px;width:59px;height:19px;padding-top:2px;text-align:left;padding-left:2px;"></div>
<div class="gc" style="left:431px;top:453px;width:35px;height:19px;padding-top:2px;text-align:left;padding-left:2px;"><span class="m">PCS</span></div>
<div class="gc" style="left:466px;top:453px;width:58px;height:19px;padding-top:2px;text-align:right;padding-right:4px;"><span class="d">2</span></div>
<div class="gc" style="left:524px;top:453px;width:59px;height:19px;padding-top:2px;text-align:right;padding-right:4px;"><span class="d">1</span></div>
<div class="gc" style="left:583px;top:453px;width:47px;height:19px;padding-top:2px;text-align:right;padding-right:4px;"><span class="d">0</span></div>
<div class="gc" style="left:630px;top:453px;width:59px;height:19px;padding-top:2px;text-align:left;padding-left:2px;">领用件</div>
<div class="gc" style="left:689px;top:453px;width:60px;height:19px;padding-top:2px;text-align:left;padding-left:2px;"></div>
<div class="gi" style="left:27px;top:472px;width:27px;height:19px;padding-top:2px">5</div>
<div class="gc" style="left:54px;top:472px;width:71px;height:19px;padding-top:2px;text-align:left;padding-left:2px;"><span class="d">3020100003</span></div>
<div class="gc" style="left:125px;top:472px;width:71px;height:19px;padding-top:2px;text-align:left;padding-left:2px;">螺丝</div>
<div class="gc" style="left:196px;top:472px;width:176px;height:19px;padding-top:2px;text-align:left;padding-left:2px;"><span class="m">PA</span><span class="d">02</span><span class="m">*</span><span class="d">25</span><span class="m">MM,</span>镀叻</div>
<div class="gc" style="left:372px;top:472px;width:59px;height:19px;padding-top:2px;text-align:left;padding-left:2px;"></div>
<div class="gc" style="left:431px;top:472px;width:35px;height:19px;padding-top:2px;text-align:left;padding-left:2px;"><span class="m">PCS</span></div>
<div class="gc" style="left:466px;top:472px;width:58px;height:19px;padding-top:2px;text-align:right;padding-right:4px;"><span class="d">2</span></div>
<div class="gc" style="left:524px;top:472px;width:59px;height:19px;padding-top:2px;text-align:right;padding-right:4px;"><span class="d">1</span></div>
<div class="gc" style="left:583px;top:472px;width:47px;height:19px;padding-top:2px;text-align:right;padding-right:4px;"><span class="d">0</span></div>
<div class="gc" style="left:630px;top:472px;width:59px;height:19px;padding-top:2px;text-align:left;padding-left:2px;">领用件</div>
<div class="gc" style="left:689px;top:472px;width:60px;height:19px;padding-top:2px;text-align:left;padding-left:2px;"></div>
<div class="gi" style="left:27px;top:491px;width:27px;height:19px;padding-top:2px">6</div>
<div class="gc" style="left:54px;top:491px;width:71px;height:19px;padding-top:2px;text-align:left;padding-left:2px;"><span class="d">3020100005</span></div>
<div class="gc" style="left:125px;top:491px;width:71px;height:19px;padding-top:2px;text-align:left;padding-left:2px;">螺母</div>
<div class="gc" style="left:196px;top:491px;width:176px;height:19px;padding-top:2px;text-align:left;padding-left:2px;"><span class="m">M</span><span class="d">5</span><span class="m">,</span>镀叻</div>
<div class="gc" style="left:372px;top:491px;width:59px;height:19px;padding-top:2px;text-align:left;padding-left:2px;"></div>
<div class="gc" style="left:431px;top:491px;width:35px;height:19px;padding-top:2px;text-align:left;padding-left:2px;"><span class="m">PCS</span></div>
<div class="gc" style="left:466px;top:491px;width:58px;height:19px;padding-top:2px;text-align:right;padding-right:4px;"><span class="d">2</span></div>
<div class="gc" style="left:524px;top:491px;width:59px;height:19px;padding-top:2px;text-align:right;padding-right:4px;"><span class="d">1</span></div>
<div class="gc" style="left:583px;top:491px;width:47px;height:19px;padding-top:2px;text-align:right;padding-right:4px;"><span class="d">0</span></div>
<div class="gc" style="left:630px;top:491px;width:59px;height:19px;padding-top:2px;text-align:left;padding-left:2px;">领用件</div>
<div class="gc" style="left:689px;top:491px;width:60px;height:19px;padding-top:2px;text-align:left;padding-left:2px;"></div>
<div class="gi" style="left:27px;top:510px;width:27px;height:19px;padding-top:2px">7</div>
<div class="gc" style="left:54px;top:510px;width:71px;height:19px;padding-top:2px;text-align:left;padding-left:2px;"><span class="d">3020200002</span></div>
<div class="gc" style="left:125px;top:510px;width:71px;height:19px;padding-top:2px;text-align:left;padding-left:2px;">电源线</div>
<div class="gc" style="left:196px;top:510px;width:176px;height:19px;padding-top:2px;text-align:left;padding-left:2px;"><span class="d">80</span><span class="m">CM</span><span class="d">22</span><span class="m">#</span><span class="d">1005</span>红黑端子线</div>
<div class="gc" style="left:372px;top:510px;width:59px;height:19px;padding-top:2px;text-align:left;padding-left:2px;"></div>
<div class="gc" style="left:431px;top:510px;width:35px;height:19px;padding-top:2px;text-align:left;padding-left:2px;"><span class="m">PCS</span></div>
<div class="gc" style="left:466px;top:510px;width:58px;height:19px;padding-top:2px;text-align:right;padding-right:4px;"><span class="d">1</span></div>
<div class="gc" style="left:524px;top:510px;width:59px;height:19px;padding-top:2px;text-align:right;padding-right:4px;"><span class="d">1</span></div>
<div class="gc" style="left:583px;top:510px;width:47px;height:19px;padding-top:2px;text-align:right;padding-right:4px;"><span class="d">0</span></div>
<div class="gc" style="left:630px;top:510px;width:59px;height:19px;padding-top:2px;text-align:left;padding-left:2px;">领用件</div>
<div class="gc" style="left:689px;top:510px;width:60px;height:19px;padding-top:2px;text-align:left;padding-left:2px;"></div>
<div class="gi" style="left:27px;top:529px;width:27px;height:19px;padding-top:2px">8</div>
<div class="gc" style="left:54px;top:529px;width:71px;height:19px;padding-top:2px;text-align:left;padding-left:2px;"><span class="d">3020300001</span></div>
<div class="gc" style="left:125px;top:529px;width:71px;height:19px;padding-top:2px;text-align:left;padding-left:2px;">磁铁</div>
<div class="gc" style="left:196px;top:529px;width:176px;height:19px;padding-top:2px;text-align:left;padding-left:2px;"><span class="d">12</span><span class="m">*</span><span class="d">12</span><span class="m">*</span><span class="d">12</span><span class="m">mm,</span>方形</div>
<div class="gc" style="left:372px;top:529px;width:59px;height:19px;padding-top:2px;text-align:left;padding-left:2px;"></div>
<div class="gc" style="left:431px;top:529px;width:35px;height:19px;padding-top:2px;text-align:left;padding-left:2px;"><span class="m">PCS</span></div>
<div class="gc" style="left:466px;top:529px;width:58px;height:19px;padding-top:2px;text-align:right;padding-right:4px;"><span class="d">1</span></div>
<div class="gc" style="left:524px;top:529px;width:59px;height:19px;padding-top:2px;text-align:right;padding-right:4px;"><span class="d">1</span></div>
<div class="gc" style="left:583px;top:529px;width:47px;height:19px;padding-top:2px;text-align:right;padding-right:4px;"><span class="d">0</span></div>
<div class="gc" style="left:630px;top:529px;width:59px;height:19px;padding-top:2px;text-align:left;padding-left:2px;">领用件</div>
<div class="gc" style="left:689px;top:529px;width:60px;height:19px;padding-top:2px;text-align:left;padding-left:2px;"></div>
<svg class="a" style="left:37px;top:382px" width="7" height="8" viewBox="0 0 7 8"><path d="M1.700 4v-1.500a1.800 1.800 0 0 1 3.600 0v1.500" fill="none" stroke="#9a9aa6" stroke-width="1.100"/><rect x="0" y="3.500" width="7" height="4.500" rx=".6" fill="#3f6fd6"/><rect x="1" y="4.300" width="5" height="1.200" fill="#86a8ee"/><rect x="2.800" y="5.300" width="1.400" height="1.500" fill="#dfe8fb"/></svg>
<div class="a" style="left:26px;top:376px;width:725px;height:172px;border:1px solid #f23535"></div>
<div class="a" style="left:25px;top:376px;width:1px;height:172px;background:#757575;"></div>
<div class="trk" style="left:882px;top:377px;width:16px;height:171px"></div>
<div class="sbb" style="left:882px;top:377px;width:16px;height:16px"></div>
<div class="sbb" style="left:882px;top:532px;width:16px;height:16px"></div>
<div class="sbb" style="left:882px;top:393px;width:16px;height:89px"></div>
<svg class="a" style="left:886px;top:383px" width="8" height="5"><path d="M0 4.5h8l-4-4z" fill="#000"/></svg>
<svg class="a" style="left:886px;top:538px" width="8" height="5"><path d="M0 0.5h8l-4 4z" fill="#000"/></svg>
<div class="a" style="left:53px;top:282px;width:860px;height:19px;border:1px solid #f23535"></div>
<div class="a" style="left:369px;top:221px;width:85px;height:27px;border:1px solid #f23535"></div>
<div class="a" style="left:558px;top:220px;width:75px;height:27px;border:1px solid #f23535"></div>
<div class="a" style="left:600px;top:247px;width:1px;height:3px;background:#000;"></div>
<div class="a" style="left:599px;top:248px;width:3px;height:1px;background:#000;"></div>
<svg class="a" style="left:0;top:190px" width="922" height="240" viewBox="0 190 922 240">
<path d="M334.2 213L356.0 220.3L354.2 216L365 227L351 226.7L354.7 224.8Z" fill="#f8383a"/>
<circle cx="318" cy="208.7" r="10" fill="#f8383a"/><text x="318" y="212.2" text-anchor="middle" font-family="Liberation Serif,serif" font-weight="bold" font-size="10.500" fill="#fff">4</text>
<path d="M663 217.7L644.7 224.2L644.4 221.2L640 229L651.7 228.6L647.8 227.4Z" fill="#f8383a"/>
<circle cx="678" cy="206.8" r="10" fill="#f8383a"/><text x="678" y="210.3" text-anchor="middle" font-family="Liberation Serif,serif" font-weight="bold" font-size="10.500" fill="#fff">1</text>
<path d="M519.6 319.8L503.3 302.4L506.6 302.2L496.3 297.9L500.6 308.4L500.7 305.0Z" fill="#f8383a"/>
<circle cx="535" cy="327.9" r="10" fill="#f8383a"/><text x="535" y="331.4" text-anchor="middle" font-family="Liberation Serif,serif" font-weight="bold" font-size="10.500" fill="#fff">2</text>
<path d="M790.4 396L767.8 404.6L768.7 400.9L760 410.7L774.5 409.6L770.3 408.3Z" fill="#f8383a"/>
<circle cx="804.9" cy="389" r="10" fill="#f8383a"/><text x="804.9" y="392.5" text-anchor="middle" font-family="Liberation Serif,serif" font-weight="bold" font-size="10.500" fill="#fff">3</text>
</svg>
</body></html>
